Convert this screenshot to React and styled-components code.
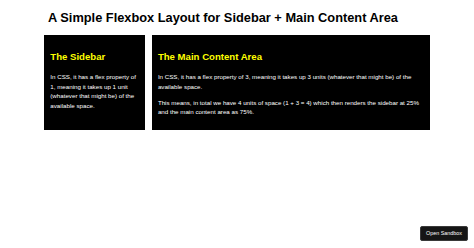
import React from 'react';
import styled, { createGlobalStyle } from 'styled-components';

const GlobalStyle = createGlobalStyle`
    html, body {
        margin: 0;
        padding: 0;
        background: #fff;
        font-family: "Liberation Sans", Arial, Helvetica, sans-serif;
        line-height: 1.5;
    }
`;

const App = () => {
    return (
        <>
            <GlobalStyle />
            <Page>
                <Title>A Simple Flexbox Layout for Sidebar + Main Content Area</Title>
                <Layout>
                    <Panel $flex={1}>
                        <PanelTitle>The Sidebar</PanelTitle>
                        <Text>In CSS, it has a flex property of 1, meaning it takes up 1 unit (whatever that might be) of the available space.</Text>
                    </Panel>
                    <Panel $flex={3}>
                        <PanelTitle>The Main Content Area</PanelTitle>
                        <Text>In CSS, it has a flex property of 3, meaning it takes up 3 units (whatever that might be) of the available space.</Text>
                        <Text>This means, in total we have 4 units of space (1 + 3 = 4) which then renders the sidebar at 25% and the main content area as 75%.</Text>
                    </Panel>
                </Layout>
            </Page>
            <SandboxButton>Open Sandbox</SandboxButton>
        </>
    )
}

export default App;

const Page = styled.div`
    width: 386px;
    margin: 0 auto;
    padding-top: 8px;
`;

const Title = styled.h1`
    margin: 0 0 8px 4px;
    font-size: 12.8px;
    line-height: 19.2px;
    font-weight: bold;
    color: #000;
`;

const Layout = styled.div`
    display: flex;
    gap: 6.4px;
    align-items: stretch;
`;

const Panel = styled.section`
    flex: ${p => p.$flex} 1 0;
    min-width: 0;
    background-color: #000;
    color: #fff;
    padding: 6.4px 6.3px;
`;

const PanelTitle = styled.h2`
    margin: 8px 0;
    font-size: 9.6px;
    line-height: 14.4px;
    font-weight: bold;
    color: #ffff00;
`;

const Text = styled.p`
    margin: 6.4px 0;
    font-size: 6.2px;
    line-height: 9.6px;
`;

const SandboxButton = styled.div`
    position: fixed;
    right: 6px;
    bottom: 7px;
    height: 13px;
    padding: 0 5px;
    display: flex;
    align-items: center;
    background-color: #151515;
    border: 1px solid #3a3a3a;
    border-radius: 2px;
    color: #fff;
    font-size: 5.4px;
`;
